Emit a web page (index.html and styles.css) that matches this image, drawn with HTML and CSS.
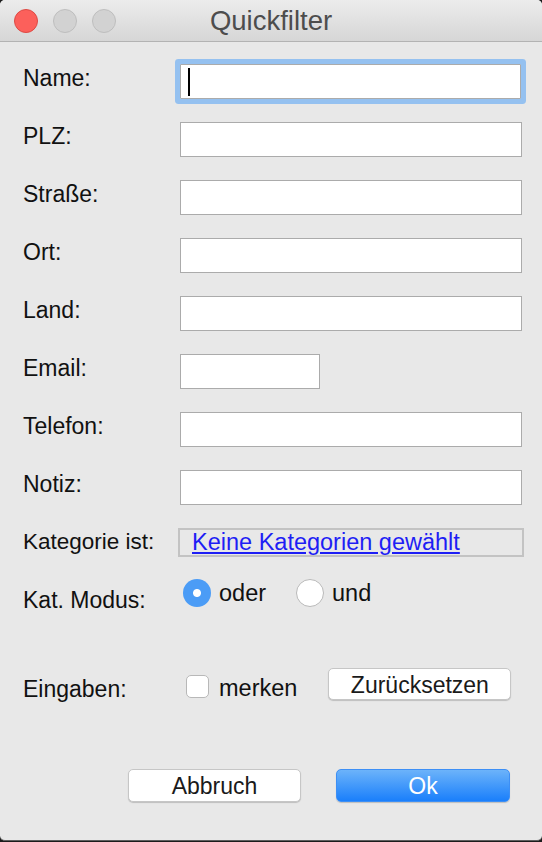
FILE: index.html
```html
<!DOCTYPE html>
<html lang="de">
<head>
    <meta charset="UTF-8">
    <title>Quickfilter</title>
    <link rel="stylesheet" href="styles.css">
</head>
<body>
<div class="window">
    <div class="titlebar">
        <div class="lights">
            <span class="light close"></span>
            <span class="light"></span>
            <span class="light"></span>
        </div>
        <div class="title">Quickfilter</div>
    </div>

    <form class="filter">
        <div class="row">
            <label for="f-name">Name:</label>
            <span class="focus-wrap"><input id="f-name" class="field focused" type="text"></span>
        </div>
        <div class="row">
            <label for="f-plz">PLZ:</label>
            <input id="f-plz" class="field" type="text">
        </div>
        <div class="row">
            <label for="f-str">Straße:</label>
            <input id="f-str" class="field" type="text">
        </div>
        <div class="row">
            <label for="f-ort">Ort:</label>
            <input id="f-ort" class="field" type="text">
        </div>
        <div class="row">
            <label for="f-land">Land:</label>
            <input id="f-land" class="field" type="text">
        </div>
        <div class="row">
            <label for="f-mail">Email:</label>
            <input id="f-mail" class="field short" type="text">
        </div>
        <div class="row">
            <label for="f-tel">Telefon:</label>
            <input id="f-tel" class="field" type="text">
        </div>
        <div class="row">
            <label for="f-notiz">Notiz:</label>
            <input id="f-notiz" class="field" type="text">
        </div>

        <div class="row cat-row">
            <label>Kategorie ist:</label>
            <div class="cat-box"><a href="#">Keine Kategorien gewählt</a></div>
        </div>

        <div class="row mode-row">
            <label>Kat. Modus:</label>
            <div class="choices">
                <span class="radio checked"></span><span class="opt">oder</span>
                <span class="radio"></span><span class="opt">und</span>
            </div>
        </div>

        <div class="row input-row">
            <label>Eingaben:</label>
            <div class="choices">
                <span class="check"></span><span class="opt">merken</span>
                <button type="button" class="btn reset">Zurücksetzen</button>
            </div>
        </div>

        <div class="actions">
            <button type="button" class="btn cancel">Abbruch</button>
            <button type="button" class="btn primary">Ok</button>
        </div>
    </form>
</div>
</body>
</html>
```

FILE: styles.css
```css
body { margin: 0; background: #1c1c1c; font-family: "Liberation Sans", Arial, sans-serif; color: #111; }

.window {
    width: 542px;
    height: 840px;
    background: #e8e8e8;
    border-bottom: 1px solid #5e5e5e;
    border-radius: 5px;
    overflow: hidden;
}

/* title bar with the three window buttons */
.titlebar {
    position: relative;
    height: 41px;
    background: linear-gradient(#ececec, #d6d6d6);
    border-bottom: 1px solid #b3b3b3;
    display: flex;
    align-items: center;
    justify-content: center;
}
.lights { position: absolute; left: 14px; top: 9px; display: flex; gap: 15px; }
.light {
    width: 22px; height: 22px;
    border-radius: 50%;
    background: #d2d2d2;
    border: 1px solid #bebebe;
}
.light.close { background: #fc605b; border-color: #dd4a44; }
.title { font-size: 27.5px; color: #4d4d4d; margin-top: 1px; }

/* form rows */
.filter { padding-top: 22px; }
.row {
    display: grid;
    grid-template-columns: 157px 1fr;
    align-items: start;
    height: 58px;
    padding: 0 20px 0 23px;
}
.row label { font-size: 23px; line-height: 24px; padding-top: 2px; }

.field {
    box-sizing: border-box;
    width: 342px;
    height: 35px;
    margin: 0;
    border: 1px solid #ababab;
    border-radius: 0;
    background: #fff;
    outline: none;
}
.field.short { width: 140px; }

.focus-wrap { position: relative; display: block; width: 342px; }
.field.focused {
    width: 341px;
    border-radius: 1px;
    box-shadow: 0 0 0 5px #95c1f0;
}
.focus-wrap::after {
    content: "";
    position: absolute;
    left: 8px; top: 4px;
    width: 2px; height: 28px;
    background: #000;
}

.cat-row { height: 51px; }
.cat-row label { font-size: 22.5px; padding-top: 2px; }
.cat-box {
    box-sizing: border-box;
    margin-left: -2px;
    width: 346px;
    height: 29px;
    border: 2px solid #c3c3c3;
    padding-left: 12px;
    font-size: 23.5px;
    line-height: 25px;
}
.cat-box a { color: #1e1ef5; text-decoration: underline; }

.mode-row { height: 89px; }
.mode-row label { padding-top: 9px; }
.choices { display: flex; align-items: center; font-size: 23.5px; }
.opt { line-height: 24px; }

.radio {
    box-sizing: border-box;
    width: 28px; height: 28px;
    border-radius: 50%;
    background: #fff;
    border: 1px solid #b9b9b9;
    margin: 0 8px 0 3px;
}
.radio + .opt { margin-right: 27px; }
.radio.checked {
    border: none;
    background: radial-gradient(circle, #fff 0 3.5px, #4b9cf6 4.5px);
}
.mode-row .radio:nth-of-type(2) { margin-left: 0; margin-right: 9px; }

.input-row { height: 101px; }
.input-row label { padding-top: 9px; }
.input-row .choices { height: 32px; }
.check {
    box-sizing: border-box;
    width: 23px; height: 23px;
    margin: 4px 10px 0 6px;
    border: 1px solid #b8b8b8;
    border-radius: 5px;
    background: #fff;
}
.input-row .opt { margin-top: 8px; margin-right: 31px; }

/* push buttons */
.btn {
    box-sizing: border-box;
    height: 33px;
    margin: 0;
    padding: 2px 0 0;
    font-family: inherit;
    font-size: 23px;
    color: #1a1a1a;
    background: #fff;
    border: 1px solid #c6c6c6;
    border-radius: 5px;
    box-shadow: 0 1px 1px rgba(0, 0, 0, 0.18);
}
.btn.reset { width: 183px; height: 32px; }
.actions { display: flex; gap: 35px; padding-left: 128px; }
.btn.cancel { width: 173px; }
.btn.primary {
    width: 174px;
    color: #fff;
    border-color: #3d8ff5;
    background: linear-gradient(#6cb3fa, #1a7ffb);
}
```
